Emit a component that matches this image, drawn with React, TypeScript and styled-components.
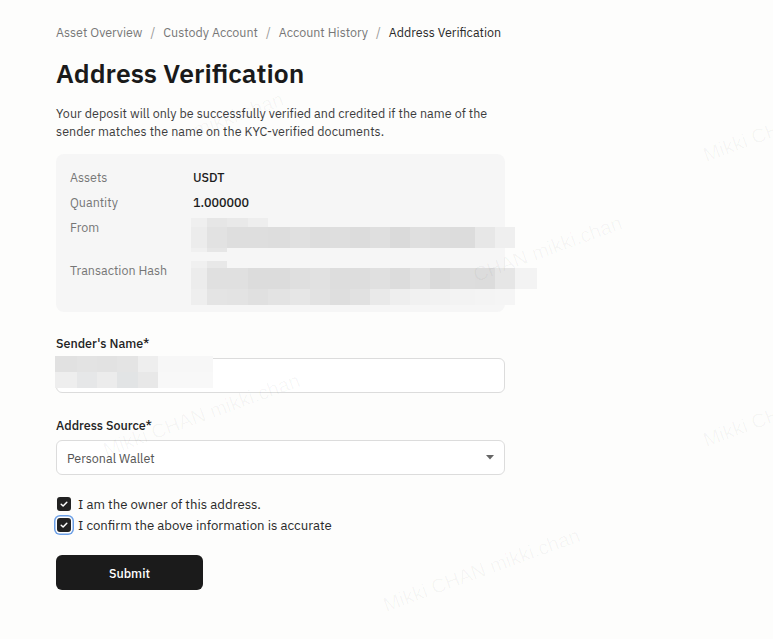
import React from "react";
import styled, { createGlobalStyle } from "styled-components";

const Global = createGlobalStyle`
  html, body { margin: 0; padding: 0; background: #fdfdfc; }
  body { font-family: "IBM Plex Sans", Inter, "Noto Sans", sans-serif; color: #1c1c1c; }
  * { box-sizing: border-box; }
`;

const Page = styled.div`
  position: relative;
  min-height: 639px;
  overflow: hidden;
  padding: 23px 56px 40px;
`;

const Container = styled.div`
  width: 449px;
  display: flex;
  flex-direction: column;
`;

const Crumbs = styled.nav`
  display: flex;
  align-items: center;
  gap: 8px;
  font-size: 12.5px;
  line-height: 18px;
  color: #777;
  white-space: nowrap;
`;

const Crumb = styled.span<{ $current?: boolean }>`
  color: ${(p) => (p.$current ? "#2a2a2a" : "#777")};
`;

const Sep = styled.span`
  color: #999;
`;

const Title = styled.h1`
  margin: 16px 0 0;
  font-size: 26.5px;
  line-height: 32px;
  font-weight: 600;
  color: #1a1a1a;
`;

const Intro = styled.p`
  margin: 15px 0 0;
  font-size: 12.5px;
  letter-spacing: 0.05px;
  line-height: 18px;
  color: #3c3c3c;
  white-space: nowrap;
`;

const Card = styled.div`
  margin-top: 14px;
  background: #f6f6f6;
  border-radius: 8px;
  padding: 14px 14px 7px;
  display: flex;
  flex-direction: column;
  gap: 7px;
`;

const Row = styled.div<{ $h?: number }>`
  display: grid;
  grid-template-columns: 123px 1fr;
  min-height: ${(p) => p.$h ?? 18}px;
  font-size: 12.5px;
  line-height: 18px;
`;

const Label = styled.span`
  color: #767676;
`;

const Value = styled.span`
  color: #1c1c1c;
  font-weight: 500;
  position: relative;
`;

const Mosaic = styled.svg`
  position: absolute;
  left: -2px;
  overflow: visible;
`;

const FieldLabel = styled.label`
  display: block;
  font-size: 12.5px;
  line-height: 18px;
  font-weight: 500;
  color: #222;
`;

const Field = styled.div<{ $top: number }>`
  margin-top: ${(p) => p.$top}px;
  display: flex;
  flex-direction: column;
  gap: 6px;
`;

const Box = styled.div`
  position: relative;
  height: 35px;
  border: 1px solid #dcdcdc;
  border-radius: 6px;
  background: #fff;
  display: flex;
  align-items: center;
  padding: 0 10px;
  font-size: 12.5px;
  color: #555;
`;

const SelectText = styled.span`
  flex: 1;
`;

const Checks = styled.div`
  margin-top: 20px;
  display: flex;
  flex-direction: column;
  gap: 3px;
`;

const CheckRow = styled.label`
  display: flex;
  align-items: center;
  gap: 7px;
  font-size: 13.2px;
  line-height: 18px;
  color: #2a2a2a;
`;

const CheckBox = styled.span<{ $focus?: boolean }>`
  width: 14px;
  height: 14px;
  margin-left: 1px;
  border-radius: 3px;
  background: #222;
  display: inline-flex;
  align-items: center;
  justify-content: center;
  box-shadow: ${(p) => (p.$focus ? "0 0 0 1.5px #fff, 0 0 0 3px #6b9fe6" : "none")};
`;

const Submit = styled.button`
  margin-top: 21px;
  width: 147px;
  height: 35px;
  border: none;
  border-radius: 6px;
  background: #1b1b1b;
  color: #fff;
  font-family: inherit;
  font-size: 12.5px;
  font-weight: 500;
  cursor: pointer;
`;

const Watermark = styled.span<{ $x: number; $y: number }>`
  position: absolute;
  left: ${(p) => p.$x}px;
  top: ${(p) => p.$y}px;
  transform: rotate(-20deg);
  transform-origin: left top;
  font-family: "Liberation Sans", Arial, sans-serif;
  font-size: 20px;
  color: rgba(0, 0, 0, 0.035);
  white-space: nowrap;
  pointer-events: none;
`;

type Cell = [number, number, number, number, string];

const fromBlocks: Cell[] = [
  [0, 0, 16, 9, "#efefef"], [16, 0, 20, 9, "#e6e6e6"], [36, 0, 21, 9, "#e9e9e9"], [57, 0, 20, 9, "#eeeeee"],
  [0, 9, 16, 21, "#ececec"], [16, 9, 20, 21, "#e2e2e2"], [36, 9, 21, 21, "#dedede"], [57, 9, 20, 21, "#dedede"],
  [77, 9, 22, 21, "#dddddd"], [99, 9, 20, 21, "#e0e0e0"], [119, 9, 20, 21, "#dddddd"], [139, 9, 20, 21, "#dedede"],
  [159, 9, 20, 21, "#dcdcdc"], [179, 9, 20, 21, "#dfdfdf"], [199, 9, 20, 21, "#dadada"], [219, 9, 20, 21, "#dfdfdf"],
  [239, 9, 20, 21, "#dddddd"], [259, 9, 25, 21, "#dcdcdc"], [284, 9, 20, 21, "#e7e7e7"], [304, 9, 20, 21, "#efefef"],
  [0, 30, 16, 4, "#f0f0f0"], [16, 30, 20, 4, "#e6e6e6"],
];

const hashBlocks: Cell[] = [
  [0, 0, 16, 7, "#f0f0f0"], [16, 0, 20, 7, "#e8e8e8"],
  [0, 7, 16, 21, "#ececec"], [16, 7, 20, 21, "#e0e0e0"], [36, 7, 21, 21, "#e0e0e0"], [57, 7, 20, 21, "#dcdcdc"],
  [77, 7, 22, 21, "#dcdcdc"], [99, 7, 20, 21, "#dfdfdf"], [119, 7, 20, 21, "#e1e1e1"], [139, 7, 20, 21, "#dddddd"],
  [159, 7, 20, 21, "#dddddd"], [179, 7, 20, 21, "#e0e0e0"], [199, 7, 20, 21, "#dcdcdc"], [219, 7, 20, 21, "#e2e2e2"],
  [239, 7, 20, 21, "#dadada"], [259, 7, 25, 21, "#dddddd"], [284, 7, 20, 21, "#dcdcdc"], [304, 7, 20, 21, "#e6e6e6"],
  [324, 7, 22, 21, "#f3f3f3"],
  [0, 28, 16, 16, "#eeeeee"], [16, 28, 20, 16, "#e4e4e4"], [36, 28, 21, 16, "#e3e3e3"], [57, 28, 20, 16, "#e0e0e0"],
  [77, 28, 22, 16, "#e3e3e3"], [99, 28, 20, 16, "#e6e6e6"], [119, 28, 20, 16, "#e2e2e2"], [139, 28, 20, 16, "#dedede"],
  [159, 28, 20, 16, "#e1e1e1"], [179, 28, 20, 16, "#e9e9e9"], [199, 28, 20, 16, "#eeeeee"], [219, 28, 20, 16, "#f1f1f1"],
  [239, 28, 20, 16, "#f2f2f2"], [259, 28, 25, 16, "#f3f3f3"], [284, 28, 20, 16, "#f4f4f4"], [304, 28, 20, 16, "#f5f5f5"],
];

const nameBlocks: Cell[] = [
  [0, 0, 22, 16, "#e1e1e1"], [22, 0, 20, 16, "#e3e3e3"], [42, 0, 20, 16, "#e2e2e2"], [62, 0, 21, 16, "#e4e4e4"],
  [83, 0, 20, 16, "#eeeeee"], [103, 0, 55, 16, "#f7f7f7"],
  [0, 16, 22, 16, "#eeeeee"], [22, 16, 20, 16, "#e6e7e8"], [42, 16, 20, 16, "#ececec"], [62, 16, 21, 16, "#e2e4e5"],
  [83, 16, 20, 16, "#e8e8e8"], [103, 16, 55, 16, "#f8f8f8"],
];

function Blocks({ cells, w, h, top }: { cells: Cell[]; w: number; h: number; top: number }) {
  return (
    <Mosaic width={w} height={h} viewBox={`0 0 ${w} ${h}`} style={{ top }}>
      {cells.map(([x, y, cw, ch, c], i) => (
        <rect key={i} x={x} y={y} width={cw} height={ch} fill={c} />
      ))}
    </Mosaic>
  );
}

function Check() {
  return (
    <svg width="10" height="10" viewBox="0 0 10 10">
      <path d="M2.2 5.2 L4.1 7 L7.8 3.2" fill="none" stroke="#fff" strokeWidth="1.5" strokeLinecap="round" strokeLinejoin="round" />
    </svg>
  );
}

export default function App() {
  return (
    <>
      <Global />
      <Page>
        <Container>
          <Crumbs>
            <Crumb>Asset Overview</Crumb>
            <Sep>/</Sep>
            <Crumb>Custody Account</Crumb>
            <Sep>/</Sep>
            <Crumb>Account History</Crumb>
            <Sep>/</Sep>
            <Crumb $current>Address Verification</Crumb>
          </Crumbs>
          <Title>Address Verification</Title>
          <Intro>
            Your deposit will only be successfully verified and credited if the name of the
            <br />
            sender matches the name on the KYC-verified documents.
          </Intro>
          <Card>
            <Row>
              <Label>Assets</Label>
              <Value>USDT</Value>
            </Row>
            <Row>
              <Label>Quantity</Label>
              <Value>1.000000</Value>
            </Row>
            <Row $h={36}>
              <Label>From</Label>
              <Value>
                <Blocks cells={fromBlocks} w={324} h={34} top={0} />
              </Value>
            </Row>
            <Row $h={44}>
              <Label>Transaction Hash</Label>
              <Value>
                <Blocks cells={hashBlocks} w={346} h={44} top={0} />
              </Value>
            </Row>
          </Card>

          <Field $top={22}>
            <FieldLabel>Sender's Name*</FieldLabel>
            <Box>
              <Blocks cells={nameBlocks} w={158} h={32} top={-3} />
            </Box>
          </Field>

          <Field $top={23}>
            <FieldLabel>Address Source*</FieldLabel>
            <Box>
              <SelectText>Personal Wallet</SelectText>
              <svg width="8" height="5" viewBox="0 0 8 5">
                <path d="M0 0 H8 L4 4.5 Z" fill="#666" />
              </svg>
            </Box>
          </Field>

          <Checks>
            <CheckRow>
              <CheckBox>
                <Check />
              </CheckBox>
              I am the owner of this address.
            </CheckRow>
            <CheckRow>
              <CheckBox $focus>
                <Check />
              </CheckBox>
              I confirm the above information is accurate
            </CheckRow>
          </Checks>

          <Submit>Submit</Submit>
        </Container>

        <Watermark $x={190} $y={120}>mikki.chan</Watermark>
        <Watermark $x={700} $y={145}>Mikki CHAN</Watermark>
        <Watermark $x={470} $y={265}>CHAN mikki.chan</Watermark>
        <Watermark $x={100} $y={440}>Mikki CHAN mikki.chan</Watermark>
        <Watermark $x={700} $y={430}>Mikki CHAN</Watermark>
        <Watermark $x={380} $y={595}>Mikki CHAN mikki.chan</Watermark>
      </Page>
    </>
  );
}
